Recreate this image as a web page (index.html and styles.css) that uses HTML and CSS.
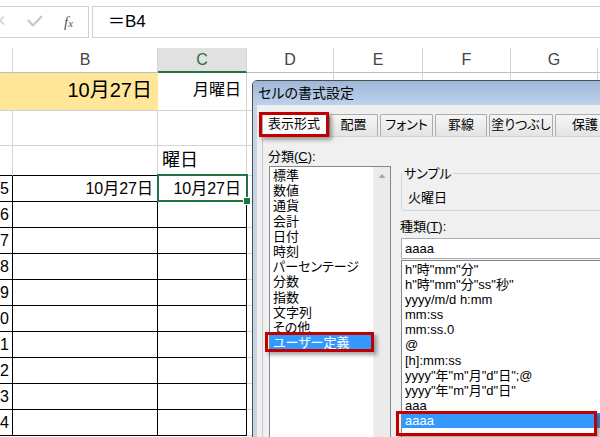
FILE: index.html
```html
<!DOCTYPE html>
<html lang="ja">
<head>
<meta charset="utf-8">
<title>セルの書式設定</title>
<link rel="stylesheet" href="styles.css">
</head>
<body>
<div class="app">
  <div class="fbar">
    <div class="fbtns">
      <svg class="fbicons" viewBox="-1 7 60 30" width="60" height="30">
        <path d="M-4 16.5 L4 24.5 M-4 24.5 L4 16.5" stroke="#cccccc" stroke-width="1.4" fill="none"/>
        <path d="M28 20 L33 25.5 L42 16" stroke="#c8c8c8" stroke-width="2.3" fill="none" stroke-linejoin="round"/>
      </svg>
      <span class="fx">f<span class="fxs">x</span></span>
    </div>
    <div class="finput">＝B4</div>
  </div>

  <div class="sheet">
    <div class="row hdr">
      <div class="cell w-a"></div>
      <div class="cell w-b">B</div>
      <div class="cell w-c sel">C</div>
      <div class="cell w-d">D</div>
      <div class="cell w-e">E</div>
      <div class="cell w-f">F</div>
      <div class="cell w-g">G</div>
      <div class="cell w-h"></div>
    </div>
    <div class="row r4">
      <div class="cell w-ab yellow big">10月27日</div>
      <div class="cell w-c right mid">月曜日</div>
      <div class="cell w-d"></div><div class="cell w-e"></div><div class="cell w-f"></div><div class="cell w-g"></div><div class="cell w-h"></div>
    </div>
    <div class="row r2">
      <div class="cell w-a"></div><div class="cell w-b"></div><div class="cell w-c"></div>
      <div class="cell w-d"></div><div class="cell w-e"></div><div class="cell w-f"></div><div class="cell w-g"></div><div class="cell w-h"></div>
    </div>
    <div class="row r3">
      <div class="cell w-a bb"></div><div class="cell w-b bb"></div><div class="cell w-c bb hd">曜日</div>
      <div class="cell w-d"></div><div class="cell w-e"></div><div class="cell w-f"></div><div class="cell w-g"></div><div class="cell w-h"></div>
    </div>
    <div class="row rd">
      <div class="cell w-a tb num">5</div><div class="cell w-b tb right">10月27日</div>
      <div class="cell w-c tb right active">10月27日<div class="selbox"><div class="handle"></div></div></div>
      <div class="cell w-d"></div><div class="cell w-e"></div><div class="cell w-f"></div><div class="cell w-g"></div><div class="cell w-h"></div>
    </div>
    <div class="row rd">
      <div class="cell w-a tb num">6</div><div class="cell w-b tb"></div><div class="cell w-c tb"></div>
      <div class="cell w-d"></div><div class="cell w-e"></div><div class="cell w-f"></div><div class="cell w-g"></div><div class="cell w-h"></div>
    </div>
    <div class="row rd">
      <div class="cell w-a tb num">7</div><div class="cell w-b tb"></div><div class="cell w-c tb"></div>
      <div class="cell w-d"></div><div class="cell w-e"></div><div class="cell w-f"></div><div class="cell w-g"></div><div class="cell w-h"></div>
    </div>
    <div class="row rd">
      <div class="cell w-a tb num">8</div><div class="cell w-b tb"></div><div class="cell w-c tb"></div>
      <div class="cell w-d"></div><div class="cell w-e"></div><div class="cell w-f"></div><div class="cell w-g"></div><div class="cell w-h"></div>
    </div>
    <div class="row rd">
      <div class="cell w-a tb num">9</div><div class="cell w-b tb"></div><div class="cell w-c tb"></div>
      <div class="cell w-d"></div><div class="cell w-e"></div><div class="cell w-f"></div><div class="cell w-g"></div><div class="cell w-h"></div>
    </div>
    <div class="row rd">
      <div class="cell w-a tb num">0</div><div class="cell w-b tb"></div><div class="cell w-c tb"></div>
      <div class="cell w-d"></div><div class="cell w-e"></div><div class="cell w-f"></div><div class="cell w-g"></div><div class="cell w-h"></div>
    </div>
    <div class="row rd">
      <div class="cell w-a tb num">1</div><div class="cell w-b tb"></div><div class="cell w-c tb"></div>
      <div class="cell w-d"></div><div class="cell w-e"></div><div class="cell w-f"></div><div class="cell w-g"></div><div class="cell w-h"></div>
    </div>
    <div class="row rd">
      <div class="cell w-a tb num">2</div><div class="cell w-b tb"></div><div class="cell w-c tb"></div>
      <div class="cell w-d"></div><div class="cell w-e"></div><div class="cell w-f"></div><div class="cell w-g"></div><div class="cell w-h"></div>
    </div>
    <div class="row rd">
      <div class="cell w-a tb num">3</div><div class="cell w-b tb"></div><div class="cell w-c tb"></div>
      <div class="cell w-d"></div><div class="cell w-e"></div><div class="cell w-f"></div><div class="cell w-g"></div><div class="cell w-h"></div>
    </div>
    <div class="row rd">
      <div class="cell w-a tb num">4</div><div class="cell w-b tb"></div><div class="cell w-c tb"></div>
      <div class="cell w-d"></div><div class="cell w-e"></div><div class="cell w-f"></div><div class="cell w-g"></div><div class="cell w-h"></div>
    </div>
  </div>

  <div class="dialog">
    <div class="dtitle">セルの書式設定</div>
    <div class="dbody">
      <div class="tabs">
        <div class="tab active">表示形式</div>
        <div class="tab t-haichi">配置</div>
        <div class="tab t-font">フォント</div>
        <div class="tab t-keisen">罫線</div>
        <div class="tab t-nuri">塗りつぶし</div>
        <div class="tab t-hogo">保護</div>
      </div>
      <div class="panel">
        <div class="lcol">
          <div class="lbl">分類(<u>C</u>):</div>
          <div class="catlist">
            <div class="items">
              <div class="it">標準</div>
              <div class="it">数値</div>
              <div class="it">通貨</div>
              <div class="it">会計</div>
              <div class="it">日付</div>
              <div class="it">時刻</div>
              <div class="it">パーセンテージ</div>
              <div class="it">分数</div>
              <div class="it">指数</div>
              <div class="it">文字列</div>
              <div class="it">その他</div>
              <div class="it sel">ユーザー定義</div>
            </div>
            <div class="vscroll">
              <svg class="sbarrow" width="17" height="17" viewBox="0 0 17 17"><polygon points="4.5,11 11.5,11 8,7" fill="#a8a8a8"/></svg>
            </div>
          </div>
        </div>
        <div class="rcol">
          <div class="sample">
            <div class="leg">サンプル</div>
            <div class="sval">火曜日</div>
          </div>
          <div class="lbl lbl2">種類(<u>T</u>):</div>
          <div class="tinput">aaaa</div>
          <div class="typelist">
            <div class="ti">h"時"mm"分"</div>
            <div class="ti">h"時"mm"分"ss"秒"</div>
            <div class="ti">yyyy/m/d h:mm</div>
            <div class="ti">mm:ss</div>
            <div class="ti">mm:ss.0</div>
            <div class="ti">@</div>
            <div class="ti">[h]:mm:ss</div>
            <div class="ti">yyyy"年"m"月"d"日";@</div>
            <div class="ti">yyyy"年"m"月"d"日"</div>
            <div class="ti">aaa</div>
            <div class="ti sel">aaaa</div>
          </div>
        </div>
      </div>
    </div>
  </div>
</div>
</body>
</html>
```

FILE: styles.css
```css
* { box-sizing: border-box; }
html, body { margin: 0; padding: 0; background: #fff; }
body {
  font-family: "Liberation Sans", "Noto Sans CJK JP", sans-serif;
  color: #000;
}
.app {
  position: relative;
  width: 600px;
  height: 437px;
  overflow: hidden;
  background: #fff;
}

/* formula bar */
.fbar { display: flex; margin-top: 6px; height: 32px; }
.fbtns {
  margin-left: -2px;
  width: 91px;
  height: 32px;
  border: 1px solid #d0d0d0;
  display: flex;
  align-items: center;
}
.fbicons { display: block; width: 60px; height: 30px; flex: none; }
.fx {
  margin-left: 5px;
  font-family: "Liberation Serif", serif;
  font-style: italic;
  font-size: 15px;
  line-height: 30px;
  color: #555;
}
.fxs { font-size: 11px; }
.finput {
  margin-left: 3px;
  flex: 1;
  height: 32px;
  border: 1px solid #d0d0d0;
  border-right: none;
  padding-left: 15px;
  font-size: 17px;
  line-height: 30px;
}

/* sheet */
.sheet { margin-top: 10px; }
.row { display: flex; }
.cell {
  flex: none;
  border-right: 1px solid #d4d4d4;
  border-bottom: 1px solid #d4d4d4;
  overflow: hidden;
  white-space: nowrap;
}
.w-a { width: 13px; }
.w-b { width: 145px; }
.w-ab { width: 158px; }
.w-c { width: 89px; }
.w-d { width: 87px; }
.w-e { width: 89px; }
.w-f { width: 88px; }
.w-g { width: 87px; }
.w-h { width: 60px; }

.hdr .cell {
  height: 25px;
  border-bottom-color: #bdbdbd;
  text-align: center;
  font-size: 16px;
  line-height: 24px;
  color: #444;
}
.hdr .cell.sel {
  background: #e1e1e1;
  border-bottom: 2px solid #217346;
  color: #217346;
}

.r4 .cell { height: 38px; }
.r2 .cell { height: 35px; }
.r3 .cell { height: 30px; }
.rd .cell { height: 26px; }

.yellow {
  background: #ffe699;
  border-right: none;
}
.big {
  text-align: right;
  padding-right: 6px;
  font-size: 20px;
  line-height: 34px;
}
.mid {
  font-size: 16px;
  line-height: 34px;
}
.right { text-align: right; padding-right: 4px; }
.r4 .right { padding-right: 5px; }
.hd {
  font-size: 18px;
  line-height: 29px;
  padding-left: 4px;
}
.bb { border-bottom-color: #000; }
.tb {
  border-right-color: #000;
  border-bottom-color: #000;
  font-size: 16px;
  line-height: 25px;
}
.num {
  text-align: right;
  padding-right: 3px;
  font-size: 16px;
}
.active { position: relative; overflow: visible; padding-right: 5px; }
.selbox {
  position: absolute;
  left: -1px;
  top: -2px;
  width: 91px;
  height: 28px;
  border: 2px solid #217346;
}
.handle {
  position: absolute;
  left: 85px;
  top: 22px;
  width: 6px;
  height: 6px;
  background: #217346;
  outline: 1px solid #fff;
}

/* dialog */
.dialog {
  position: absolute;
  left: 252px;
  top: 80px;
  width: 380px;
  height: 400px;
  border: 1px solid #4d4d4d;
  border-radius: 5px 5px 0 0;
  background: #c4d5ea;
  font-feature-settings: "palt";
  overflow: hidden;
}
.dtitle {
  height: 24px;
  line-height: 24px;
  padding-left: 5px;
  font-size: 14px;
  background: linear-gradient(#9fb8d8, #bcd2eb);
}
.dbody {
  margin-left: 4px;
  height: 380px;
  background: #f0f0f0;
  padding-top: 7px;
}
.tabs {
  display: flex;
  align-items: flex-end;
  height: 24px;
  padding-left: 5px;
}
.tab {
  flex: none;
  height: 22px;
  border: 1px solid #acacac;
  border-bottom: none;
  border-radius: 2px 2px 0 0;
  background: linear-gradient(#f6f6f6, #e3e3e3);
  font-size: 13px;
  line-height: 19px;
  text-align: center;
  margin-left: 2px;
}
.tab.active {
  width: 67px;
  height: 25px;
  margin-left: 0;
  margin-bottom: -1px;
  background: #fbfbfb;
  position: relative;
  z-index: 2;
  text-align: left;
  padding-left: 5px;
  line-height: 22px;
}
.tab.active::after {
  content: "";
  position: absolute;
  left: -4px;
  top: -1px;
  right: -1px;
  bottom: 0px;
  border: 3px solid #c00000;
  box-shadow: 3px 3px 4px rgba(0, 0, 0, 0.35);
}
.t-haichi { width: 49px; margin-left: 0; }
.t-font { width: 53px; }
.t-keisen { width: 52px; }
.t-nuri { width: 64px; }
.t-hogo { width: 60px; }

.panel {
  margin-left: 5px;
  height: 360px;
  border-top: 1px solid #cfcfcf;
  border-left: 1px solid #c8c8c8;
  display: flex;
  align-items: flex-start;
  gap: 10px;
  padding: 12px 0 0 6px;
}
.lcol { width: 122px; flex: none; }
.rcol { flex: 1; }
.lbl {
  font-size: 13px;
  line-height: 15px;
  margin-left: -1px;
}
.catlist {
  margin-top: 2px;
  width: 122px;
  height: 300px;
  border: 1px solid #828790;
  background: #fff;
  display: flex;
}
.items { width: 103px; flex: none; padding-top: 1px; }
.it {
  height: 15.2px;
  line-height: 15.2px;
  font-size: 13px;
  padding-left: 3px;
  margin-right: 2px;
  white-space: nowrap;
}
.it.sel, .ti.sel {
  background: #3399ff;
  color: #fff;
  position: relative;
}
.it.sel::after {
  content: "";
  position: absolute;
  left: -5px;
  top: -3px;
  right: -3px;
  bottom: -2px;
  border: 3px solid #c00000;
  box-shadow: 3px 3px 4px rgba(0, 0, 0, 0.35);
}
.vscroll {
  width: 17px;
  flex: none;
  background: #ebebeb;
  border-left: 1px solid #f4f4f4;
}
.sbarrow { display: block; }

.sample {
  margin-top: 24px;
  height: 38px;
  border: 1px solid #cad7e0;
  border-radius: 3px;
  font-size: 13px;
  line-height: 15px;
}
.leg {
  width: fit-content;
  margin: -8px 0 0 1px;
  padding: 0 1px;
  background: #f0f0f0;
}
.sval {
  margin: 9px 0 0 6px;
}
.lbl2 { margin-top: 8px; }
.tinput {
  margin-top: 4px;
  height: 21px;
  border: 1px solid #abadb3;
  background: #fff;
  padding-left: 3px;
  font-size: 13px;
  line-height: 19px;
}
.typelist {
  margin-top: 1px;
  height: 200px;
  border: 1px solid #828790;
  background: #fff;
  padding-top: 1px;
}
.ti {
  height: 15.1px;
  line-height: 15.1px;
  font-size: 13px;
  padding-left: 3px;
  white-space: nowrap;
}
.ti.sel::after {
  content: "";
  position: absolute;
  left: -6px;
  top: -1.5px;
  width: 195px;
  height: 19px;
  border: 3px solid #c00000;
  box-shadow: 3px 3px 4px rgba(0, 0, 0, 0.35);
}
```
